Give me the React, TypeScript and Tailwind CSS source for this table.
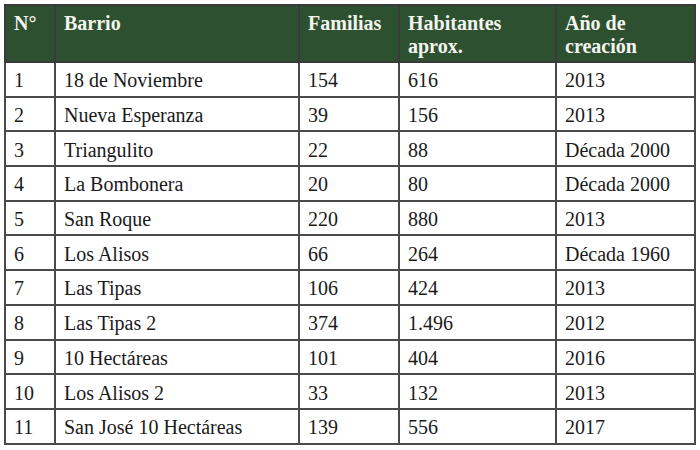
const rows: [string, string, string, string, string][] = [
  ["1", "18 de Noviembre", "154", "616", "2013"],
  ["2", "Nueva Esperanza", "39", "156", "2013"],
  ["3", "Triangulito", "22", "88", "Década 2000"],
  ["4", "La Bombonera", "20", "80", "Década 2000"],
  ["5", "San Roque", "220", "880", "2013"],
  ["6", "Los Alisos", "66", "264", "Década 1960"],
  ["7", "Las Tipas", "106", "424", "2013"],
  ["8", "Las Tipas 2", "374", "1.496", "2012"],
  ["9", "10 Hectáreas", "101", "404", "2016"],
  ["10", "Los Alisos 2", "33", "132", "2013"],
  ["11", "San José 10 Hectáreas", "139", "556", "2017"],
]

const headers = ["N°", "Barrio", "Familias", "Habitantes aprox.", "Año de creación"]

export default function App() {
  return (
    <div className="w-[700px] h-[450px] bg-white pl-[4px] pt-[4px] font-['Liberation_Serif']">
      <table className="border-collapse table-fixed w-[690px] text-[20px] leading-[23px] text-[#1a1a1a] font-['Liberation_Serif']">
        <colgroup>
          <col className="w-[50px]" />
          <col className="w-[244px]" />
          <col className="w-[100px]" />
          <col className="w-[157px]" />
          <col className="w-[139px]" />
        </colgroup>
        <thead>
          <tr className="h-[57px] bg-[#2d5130]">
            {headers.map((h) => (
              <th
                key={h}
                className="border-2 border-[#3a3a3a] align-top text-left font-bold font-['Liberation_Serif'] text-[20px] leading-[23px] text-[#f4f4ee] px-[8px] pt-[6px] pb-0"
              >
                {h}
              </th>
            ))}
          </tr>
        </thead>
        <tbody>
          {rows.map((r) => (
            <tr key={r[0]} className="h-[34.7px]">
              {r.map((c, i) => (
                <td
                  key={i}
                  className="border-2 border-[#4a4a4a] align-middle font-['Liberation_Serif'] text-[20px] leading-[23px] px-[8px] pt-[3px] pb-0 whitespace-nowrap"
                >
                  {c}
                </td>
              ))}
            </tr>
          ))}
        </tbody>
      </table>
    </div>
  )
}
